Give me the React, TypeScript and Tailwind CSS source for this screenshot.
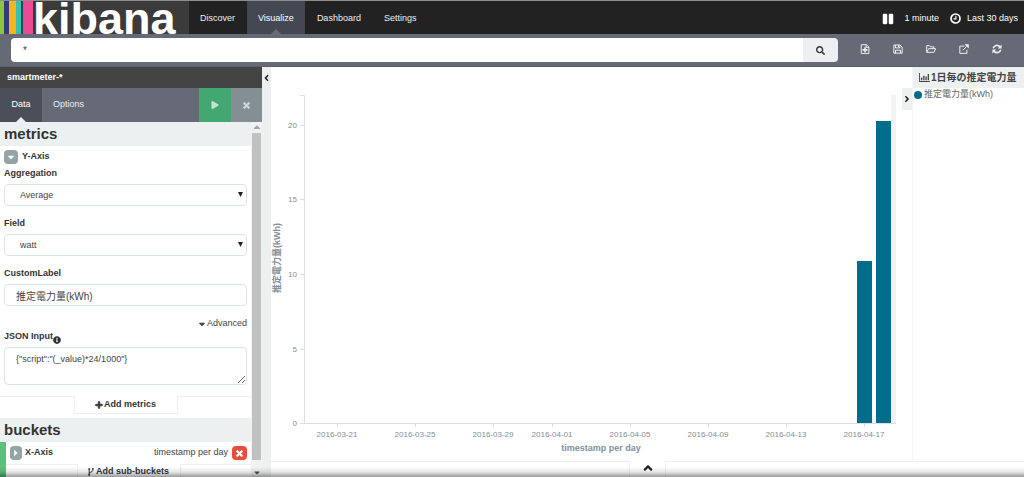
import React from "react";
import {
  FaAngleDown,
  FaCaretDown,
  FaCaretRight,
  FaInfoCircle,
  FaPause,
  FaPlay,
  FaPlus,
  FaSearch,
  FaTimes,
} from "react-icons/fa";

const NAV_LINKS = ["Discover", "Visualize", "Dashboard", "Settings"];

const Y_TICKS = [
  { label: "20", y: 58 },
  { label: "15", y: 132 },
  { label: "10", y: 207 },
  { label: "5", y: 282 },
  { label: "0", y: 356 },
];

const X_TICKS = [
  { label: "2016-03-21", x: 66 },
  { label: "2016-03-25", x: 144 },
  { label: "2016-03-29", x: 222 },
  { label: "2016-04-01", x: 281 },
  { label: "2016-04-05", x: 359 },
  { label: "2016-04-09", x: 437 },
  { label: "2016-04-13", x: 515 },
  { label: "2016-04-17", x: 593 },
];

const BARS = [
  { x: 586, y: 194 },
  { x: 605, y: 54 },
];

/* Toolbar icons, all on a 12 unit grid */
const TOOLS = [
  {
    name: "New visualization",
    outline: "M1.500 .8h6l3.200 3v7.500H1.500zM7.300 1v3h3.200",
    fill: "M5 4h2v2h2v2H7v2H5V8H3V6h2z",
  },
  {
    name: "Save visualization",
    outline: "M1 1.200h7.500L11 3.700v7.300H1zM3 11V7.500h6V11M3 1.500v3.200h5.200V1.500",
    fill: "M6 1.500h1.500v2.500H6z",
  },
  {
    name: "Load saved visualization",
    outline: "M.8 9.800V2h3.400l1 1.400h4.300v2M3.200 5.600h8.400L9.500 10H.9z",
    fill: "",
  },
  {
    name: "Share visualization",
    outline: "M6.500 2.500H1v8.700h8.500V7M4.700 7.500L9.500 2.700",
    fill: "M6.500 .2h5.300v5.300z",
  },
  {
    name: "Refresh",
    outline: "M1.500 5a4.600 4.600 0 0 1 7.900-1.800M10.500 7a4.600 4.600 0 0 1-7.900 1.800",
    fill: "M11.500 .6v4.700H6.800zM.5 11.400V6.700h4.700z",
  },
];

function Logo() {
  return (
    <a href="#" aria-label="kibana" className="flex w-[189px] shrink-0 bg-[#3b3b3b]">
      <span className="w-1 bg-[#8dc63f]" />
      <span className="w-[5px] bg-[#353a7d]" />
      <span className="w-[7px] bg-[#f5b61c]" />
      <span className="w-[5px] bg-[#3ebeb0]" />
      <span className="w-0.5 bg-[#17505a]" />
      <span className="w-[10px] bg-[#ec4a94]" />
      <span className="h-[33px] text-[45px] leading-[36px] font-bold text-white">kibana</span>
    </a>
  );
}

function Navbar() {
  return (
    <nav className="flex h-[34px] shrink-0 border-t border-[#8a8e8e] bg-[#222]">
      <Logo />
      {NAV_LINKS.map((link) => (
        <a
          key={link}
          href="#"
          className={`relative mr-px flex items-center px-[11px] pt-0.5 text-[9px] ${
            link === "Visualize" ? "bg-[#444852] text-white" : "text-[#ecf0f1]"
          }`}
        >
          {link}
          {link === "Visualize" && (
            <svg className="absolute bottom-0 left-1/2 h-[5px] w-[10px] -translate-x-1/2" viewBox="0 0 10 5">
              <path d="M0 5L5 0l5 5z" fill="#656a76" />
            </svg>
          )}
        </a>
      ))}
      <div className="ml-auto flex items-center pt-0.5 pr-1.5 text-[9px] text-white">
        <button aria-label="Pause auto refresh" className="mr-2.5">
          <FaPause className="size-3" />
        </button>
        <button className="mr-[11px]">1 minute</button>
        <button className="flex items-center gap-1.5">
          <svg className="size-[11px]" viewBox="0 0 11 11" fill="none" stroke="white">
            <circle cx="5.5" cy="5.5" r="4.500" strokeWidth="1.700" />
            <path d="M5.900 2.700v3.200H3.500" strokeWidth="1.100" />
          </svg>
          Last 30 days
        </button>
      </div>
    </nav>
  );
}

function SearchBar() {
  return (
    <div className="flex h-[33px] shrink-0 items-center border-b border-[#5c606b] bg-[#656a76] pr-[22px] pl-[11px]">
      <form className="flex h-6 flex-1" onSubmit={(e) => e.preventDefault()}>
        <input
          aria-label="Search query"
          defaultValue="*"
          className="h-6 min-w-0 flex-1 rounded-l bg-white px-3 text-[10px] text-[#444] outline-none"
        />
        <button aria-label="Search" className="flex w-[35px] items-center justify-center rounded-r bg-[#ecf0f1] text-[#333]">
          <FaSearch className="size-[9px]" />
        </button>
      </form>
      <div className="-mt-0.5 ml-[22px] flex gap-[23px]">
        {TOOLS.map((tool) => (
          <button key={tool.name} aria-label={tool.name}>
            <svg className="size-2.5" viewBox="0 0 12 12">
              <path d={tool.outline} fill="none" stroke="#ecf0f1" strokeWidth={tool.name === "Refresh" ? 2 : 1.2} />
              <path d={tool.fill} fill="#ecf0f1" />
            </svg>
          </button>
        ))}
      </div>
    </div>
  );
}

function SelectField({ id, label, value }: { id: string; label: string; value: string }) {
  return (
    <div className="mb-3">
      <label htmlFor={id} className="block h-4 text-[9px] leading-[10px] font-bold text-[#333]">
        {label}
      </label>
      <div className="relative">
        <select
          id={id}
          defaultValue={value}
          className="h-[22px] w-full appearance-none rounded-sm border border-[#dce4e6] bg-white px-[15px] pt-0.5 text-[9px] text-[#444]"
        >
          <option>{value}</option>
        </select>
        <svg className="pointer-events-none absolute top-2 right-1 size-[5px]" viewBox="0 0 5 5">
          <path d="M0 0h5L2.500 5z" fill="#222" />
        </svg>
      </div>
    </div>
  );
}

function Sidebar() {
  return (
    <aside className="flex w-[262px] shrink-0 flex-col overflow-hidden">
      <h1 className="h-[21px] shrink-0 bg-[#444] px-[7px] text-[9px] leading-5 font-bold text-white">smartmeter-*</h1>
      <div className="flex h-[34px] shrink-0 bg-[#656a76] text-[9px] text-[#ecf0f1]">
        <button className="relative w-[42px] bg-[#4b4f59] text-white">
          Data
          <svg className="absolute bottom-0 left-1/2 h-[5px] w-[10px] -translate-x-1/2" viewBox="0 0 10 5">
            <path d="M0 5L5 0l5 5z" fill="#ecf0f1" />
          </svg>
        </button>
        <button className="px-[11px]">Options</button>
        <button aria-label="Apply changes" className="ml-auto flex w-8 items-center justify-center bg-[#43a772] text-[#c5e3d2]">
          <FaPlay className="size-2" />
        </button>
        <button aria-label="Discard changes" className="flex w-[31px] items-center justify-center bg-[#838f95] text-[#d0d6d8]">
          <FaTimes className="size-[9px]" strokeWidth={50} />
        </button>
      </div>

      <div className="flex min-h-0 flex-1">
        <div className="min-w-0 flex-1 overflow-hidden text-[9px] text-[#444]">
          <h2 className="h-6 bg-[#ecf0f1] px-1 text-[15px] leading-6 font-bold text-[#333]">metrics</h2>
          <div className="px-1 pt-1">
            <div className="mb-1 flex h-3.5 items-center gap-1 font-bold text-[#333]">
              <button aria-label="Collapse Y-Axis" className="flex size-3.5 items-center justify-center rounded-sm bg-[#95a5a6] text-white">
                <FaCaretDown className="size-2.5" />
              </button>
              Y-Axis
            </div>
            <SelectField id="aggregation" label="Aggregation" value="Average" />
            <SelectField id="field" label="Field" value="watt" />
            <label htmlFor="custom-label" className="block h-4 leading-[10px] font-bold text-[#333]">
              CustomLabel
            </label>
            <input
              id="custom-label"
              defaultValue="推定電力量(kWh)"
              className="block h-[22px] w-full rounded-sm border border-[#dce4e6] bg-white px-[11px] text-[10px]"
            />
            <button className="mt-3 ml-auto flex h-3 items-center">
              <FaCaretDown className="size-2.5" />
              Advanced
            </button>
            <label htmlFor="json-input" className="flex h-[17px] items-start leading-3 font-bold text-[#333]">
              JSON Input
              <FaInfoCircle className="mt-1.5 size-2" />
            </label>
            <textarea
              id="json-input"
              defaultValue={'{"script":"(_value)*24/1000"}'}
              className="block h-[38px] w-full resize-y rounded-sm border border-[#dce4e6] bg-white px-[11px] py-1 text-[9px] leading-[14px]"
            />
          </div>
          <div className="mt-[11px] mb-1 flex h-[18px]">
            <span className="flex-1 border-t border-[#ecf0f1]" />
            <button className="flex w-[104px] items-center justify-center border border-t-0 border-[#ecf0f1] font-bold text-[#333]">
              <FaPlus className="mr-px size-2" stroke="currentColor" strokeWidth={50} />
              Add metrics
            </button>
            <span className="flex-1 border-t border-[#ecf0f1]" />
          </div>

          <h2 className="h-6 bg-[#ecf0f1] px-1 text-[15px] leading-6 font-bold text-[#333]">buckets</h2>
          <div className="border-l-[6px] border-[#58c27d]">
            <div className="flex h-[22px] items-center pr-1 pl-1">
              <button aria-label="Expand X-Axis" className="mr-[3px] flex h-3.5 w-3 items-center justify-center rounded-sm bg-[#95a5a6] text-white">
                <FaCaretRight className="size-2.5" />
              </button>
              <span className="font-bold text-[#333]">X-Axis</span>
              <span className="mr-1 ml-auto">timestamp per day</span>
              <button aria-label="Remove X-Axis" className="flex h-3.5 w-[15px] items-center justify-center rounded-sm bg-[#e74c3c] text-white">
                <FaTimes className="size-[9px]" strokeWidth={50} />
              </button>
            </div>
            <div className="flex h-[18px]">
              <span className="flex-1 border-t border-[#ecf0f1]" />
              <button className="flex w-[104px] items-center justify-center gap-0.5 border-x border-[#ecf0f1] pb-0.5 font-bold text-[#333]">
                <svg className="h-2 w-[6px]" viewBox="0 0 6 8" fill="none" stroke="#333">
                  <path d="M1.200 1v6M4.800 1.200v1.300c0 1.800-3.600 1.200-3.600 3.200" />
                  <path d="M.4 1h1.600M.4 7h1.600M4 1h1.600" strokeWidth="1.500" />
                </svg>
                Add sub-buckets
              </button>
              <span className="flex-1 border-t border-[#ecf0f1]" />
            </div>
          </div>
        </div>

        {/* Scroll bar of the editor */}
        <div className="flex w-[11px] shrink-0 flex-col items-center bg-[#f1f1f1]">
          <FaCaretDown className="h-[11px] w-2 shrink-0 rotate-180 text-[#a3a3a3]" />
          <div className="w-[9px] flex-1 bg-[#c1c1c1]" />
          <FaCaretDown className="mt-2 h-[9px] w-2 shrink-0 text-[#505050]" />
        </div>
      </div>
    </aside>
  );
}

function BarChart() {
  return (
    <svg className="w-full" viewBox="0 0 631 394" role="img" aria-label="推定電力量(kWh) / timestamp per day">
      <rect x="620" y="28" width="5" height="328" fill="#f3f3f3" />
      <path d="M29 28.500h4.500V356.500H625M29 356.500h4" fill="none" stroke="#ddd" />
      {Y_TICKS.map((tick) => (
        <g key={tick.label}>
          <path d={`M29 ${tick.y}.5h4`} stroke="#ddd" />
          <text x="26" y={tick.y + 3} textAnchor="end" fontSize="8" fill="#848e96">
            {tick.label}
          </text>
        </g>
      ))}
      {X_TICKS.map((tick) => (
        <g key={tick.label}>
          <path d={`M${tick.x}.5 357v3`} stroke="#ddd" />
          <text x={tick.x} y="370" textAnchor="middle" fontSize="8" fill="#848e96">
            {tick.label}
          </text>
        </g>
      ))}
      {BARS.map((bar) => (
        <rect key={bar.x} x={bar.x} y={bar.y} width="15" height={356 - bar.y} fill="#006e8a" />
      ))}
      <text x="330" y="384" textAnchor="middle" fontSize="9" fontWeight="bold" fill="#848e96">
        timestamp per day
      </text>
      <text transform="translate(9 191) rotate(-90)" textAnchor="middle" fontSize="9" fontWeight="bold" fill="#848e96">
        推定電力量(kWh)
      </text>
    </svg>
  );
}

function Legend() {
  return (
    <div className="flex w-[122px] shrink-0">
      <button aria-label="Hide legend" className="mt-[21px] flex h-[22px] w-2.5 items-center justify-center bg-[#ecf0f1] text-[#222]">
        <FaAngleDown className="size-2.5 -rotate-90" />
      </button>
      <div className="flex-1 border-l border-[#f3f5f5]">
        <h2 className="flex h-[21px] items-center bg-[#ecf0f1] pl-1.5 text-[10px] font-bold whitespace-nowrap text-[#444]">
          <svg className="mr-px h-[9px] w-[11px] shrink-0" viewBox="0 0 12 10" fill="#444">
            <path d="M0 0h1v9h11v1H0zM2 5h1.500v3H2zM4.500 3H6v5H4.500zM7 4h1.500v4H7zM9.500 1H11v7H9.500z" />
          </svg>
          1日毎の推定電力量
        </h2>
        <div className="flex h-3.5 items-center gap-0.5 pl-px text-[9px] whitespace-nowrap text-[#666]">
          <span className="size-2 rounded-full bg-[#006e8a]" />
          推定電力量(kWh)
        </div>
      </div>
    </div>
  );
}

export default function App() {
  return (
    <div className="relative flex h-screen flex-col overflow-hidden bg-white font-['Liberation_Sans','Noto_Sans_CJK_JP',sans-serif]">
      <Navbar />
      <SearchBar />
      <main className="flex min-h-0 flex-1">
        <Sidebar />
        <div className="w-[9px] shrink-0 bg-[#ecf0f1]">
          <button aria-label="Collapse editor" className="flex h-[22px] w-full items-center justify-center text-[#222]">
            <FaAngleDown className="size-2.5 rotate-90" />
          </button>
        </div>
        <section className="flex min-w-0 flex-1 flex-col">
          <div className="flex min-h-0 flex-1">
            <div className="min-w-0 flex-1">
              <BarChart />
            </div>
            <Legend />
          </div>
          <div className="flex h-4 shrink-0">
            <span className="flex-1 border-t border-[#ecf0f1]" />
            <button aria-label="Show table" className="flex w-[37px] items-start justify-center border-x border-[#ecf0f1] text-[#222]">
              <FaAngleDown className="size-3.5 rotate-180" />
            </button>
            <span className="flex-1 border-t border-[#ecf0f1]" />
          </div>
        </section>
      </main>
      <div className="pointer-events-none absolute inset-x-0 bottom-0 h-2.5 bg-linear-to-b from-transparent via-black/10 to-black/40" />
    </div>
  );
}
